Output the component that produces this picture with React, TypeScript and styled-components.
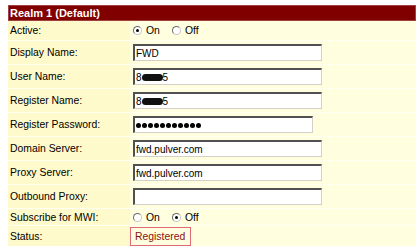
import React from 'react';
import styled, { createGlobalStyle } from 'styled-components';

const Global = createGlobalStyle`
  body {
    margin: 0;
    background: #ffffff;
    font-family: "Liberation Sans", Arial, sans-serif;
  }
`;

const Page = styled.div`
  padding: 5px 2px 0 8px;
  width: 408px;
`;

const Header = styled.div`
  height: 16px;
  background: #800000;
  border: 1px solid #a04040;
  box-sizing: border-box;
  color: #ffffff;
  font-weight: bold;
  font-size: 11px;
  line-height: 14px;
  padding-left: 1px;
`;

const Row = styled.div<{ $h: number }>`
  display: grid;
  grid-template-columns: 122px 1fr;
  height: ${(p) => p.$h}px;
  border-bottom: 1px solid #fffff2;
  box-sizing: border-box;
`;

const Label = styled.div`
  display: flex;
  align-items: center;
  padding-left: 2px;
  background: #fffacb;
  color: #000000;
  font-size: 10.4px;
`;

const Value = styled.div`
  display: flex;
  align-items: center;
  padding-left: 3px;
  background: #ffffe0;
`;

const Field = styled.div<{ $w: number }>`
  width: ${(p) => p.$w}px;
  height: 17px;
  box-sizing: border-box;
  background: #ffffff;
  border-style: solid;
  border-width: 2px 1px 1px 2px;
  border-color: #505050 #d4d0c8 #d4d0c8 #505050;
  display: flex;
  align-items: center;
  padding-left: 1px;
  font-size: 10px;
  color: #000000;
  white-space: nowrap;
`;

const Blob = styled.span`
  display: inline-block;
  width: 21px;
  height: 7px;
  border-radius: 4px;
  background: #111111;
`;

const Dot = styled.span`
  display: inline-block;
  width: 5px;
  height: 5px;
  border-radius: 50%;
  background: #000000;
  margin-right: 1px;
`;

const RadioGroup = styled.div`
  display: flex;
  align-items: center;
  font-size: 10.4px;
`;

const RadioItem = styled.span`
  display: flex;
  align-items: center;
  margin-right: 12px;
`;

const Circle = styled.span<{ $on: boolean }>`
  width: 9px;
  height: 9px;
  box-sizing: border-box;
  border-radius: 50%;
  border: 1px solid #6a6a6a;
  border-right-color: #c8c8c8;
  border-bottom-color: #c8c8c8;
  background: #ffffff;
  margin-right: 4px;
  display: flex;
  align-items: center;
  justify-content: center;
  &::after {
    content: '';
    width: 3px;
    height: 3px;
    border-radius: 50%;
    background: ${(p) => (p.$on ? '#000000' : 'transparent')};
  }
`;

const StatusBox = styled.span`
  margin-left: -3px;
  height: 19px;
  box-sizing: border-box;
  border: 1px solid #e06a78;
  color: #8a1010;
  font-size: 10.4px;
  display: flex;
  align-items: center;
  padding: 0 5px 0 4px;
`;

function Radio({ on }: { on: boolean }) {
  return (
    <RadioGroup>
      <RadioItem>
        <Circle $on={on} />
        On
      </RadioItem>
      <RadioItem>
        <Circle $on={!on} />
        Off
      </RadioItem>
    </RadioGroup>
  );
}

function Masked() {
  return (
    <>
      8<Blob />5
    </>
  );
}

export default function App() {
  return (
    <>
      <Global />
      <Page>
        <Header>Realm 1 (Default)</Header>
        <Row $h={20}>
          <Label>Active:</Label>
          <Value>
            <Radio on />
          </Value>
        </Row>
        <Row $h={24}>
          <Label>Display Name:</Label>
          <Value>
            <Field $w={189}>FWD</Field>
          </Value>
        </Row>
        <Row $h={24}>
          <Label>User Name:</Label>
          <Value>
            <Field $w={189}>
              <Masked />
            </Field>
          </Value>
        </Row>
        <Row $h={24}>
          <Label>Register Name:</Label>
          <Value>
            <Field $w={189}>
              <Masked />
            </Field>
          </Value>
        </Row>
        <Row $h={24}>
          <Label>Register Password:</Label>
          <Value>
            <Field $w={180}>
              {Array.from({ length: 11 }).map((_, i) => (
                <Dot key={i} />
              ))}
            </Field>
          </Value>
        </Row>
        <Row $h={24}>
          <Label>Domain Server:</Label>
          <Value>
            <Field $w={189}>fwd.pulver.com</Field>
          </Value>
        </Row>
        <Row $h={24}>
          <Label>Proxy Server:</Label>
          <Value>
            <Field $w={189}>fwd.pulver.com</Field>
          </Value>
        </Row>
        <Row $h={24}>
          <Label>Outbound Proxy:</Label>
          <Value>
            <Field $w={189} />
          </Value>
        </Row>
        <Row $h={17}>
          <Label>Subscribe for MWI:</Label>
          <Value>
            <Radio on={false} />
          </Value>
        </Row>
        <Row $h={21}>
          <Label>Status:</Label>
          <Value>
            <StatusBox>Registered</StatusBox>
          </Value>
        </Row>
      </Page>
    </>
  );
}
